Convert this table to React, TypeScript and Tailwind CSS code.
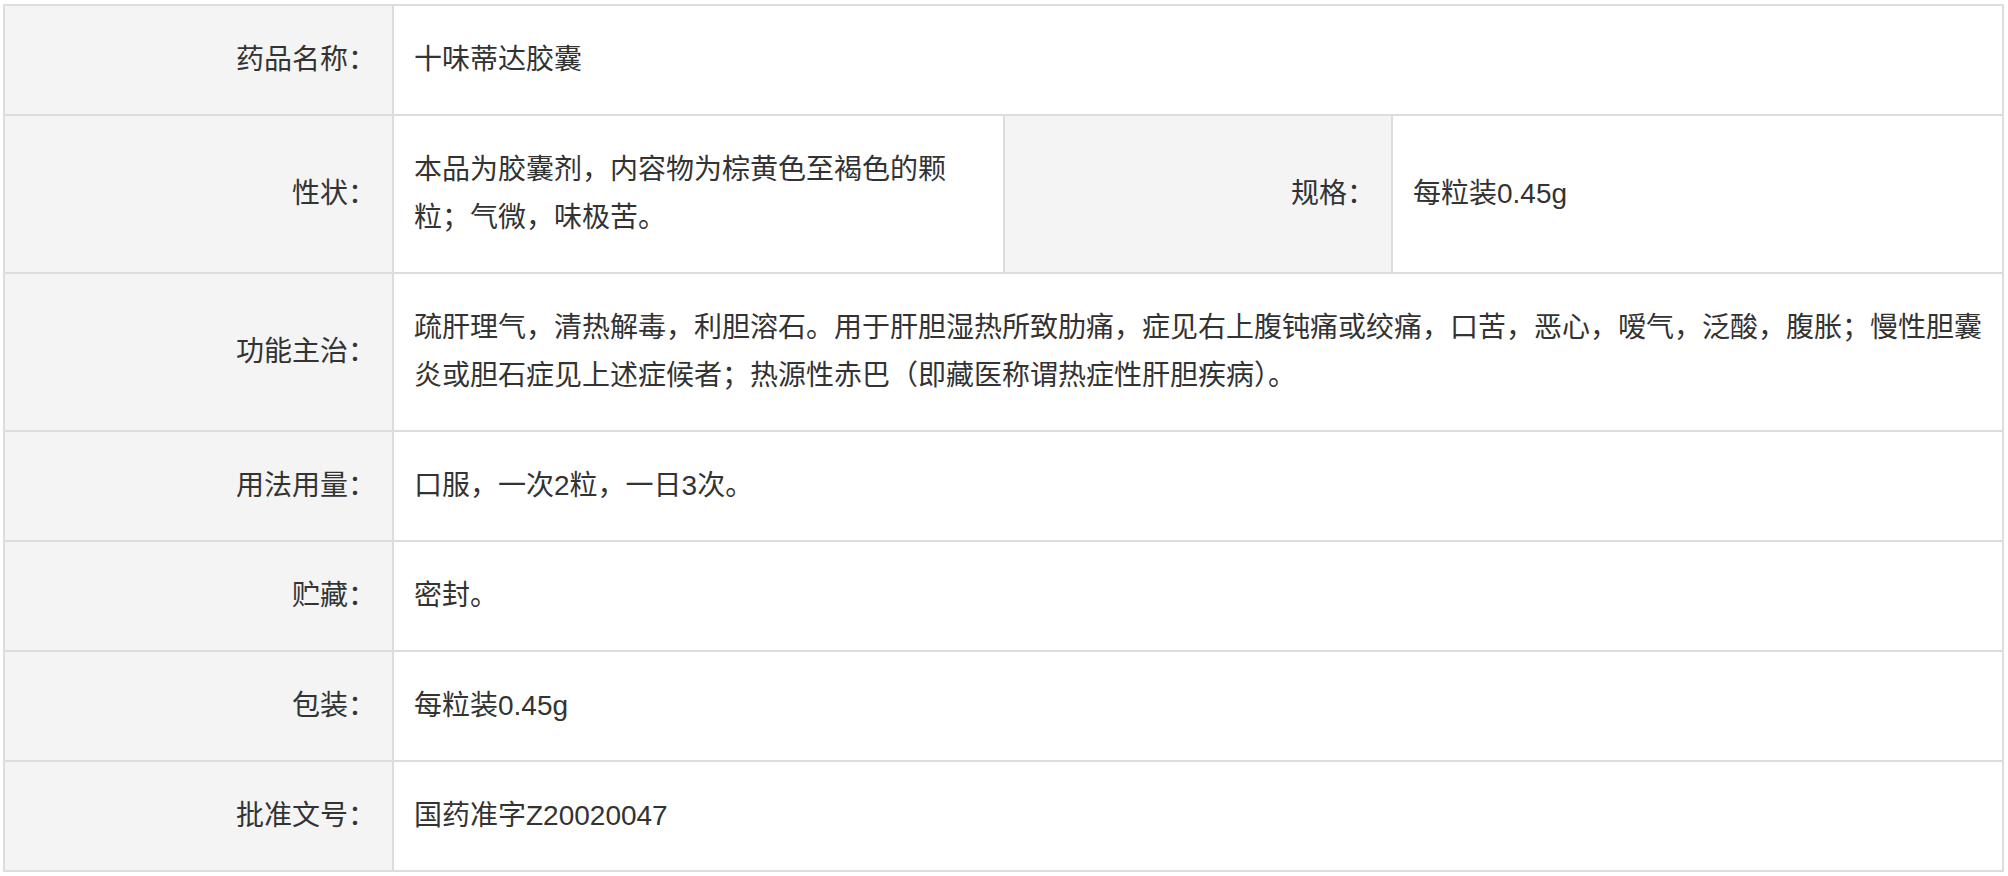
import React from "react";

const Label = ({ children }: { children: React.ReactNode }) => (
  <div className="flex items-center justify-end border-r-2 border-b-2 border-[#dddddd] bg-[#f4f4f4] py-[30px] pr-[16px] pl-[20px]">
    <span>{children}：</span>
  </div>
);

const Value = ({ children, wide }: { children: React.ReactNode; wide?: boolean }) => (
  <div
    className={
      wide
        ? "col-span-3 flex items-center border-r-2 border-b-2 border-[#dddddd] bg-white py-[30px] pl-[20px] pr-[10px]"
        : "flex items-center border-r-2 border-b-2 border-[#dddddd] bg-white py-[30px] pl-[20px] pr-[20px]"
    }
  >
    <span>{children}</span>
  </div>
);

export default function App() {
  return (
    <div className="min-h-screen bg-white pt-[4px] pl-[3px] font-['Liberation_Sans','Noto_Sans_CJK_SC',sans-serif] text-[28px] leading-[48px] text-[#333333]">
      <div className="grid w-fit grid-cols-[389px_611px_388px_611px] border-t-2 border-l-2 border-[#dddddd]">
        <Label>药品名称</Label>
        <Value wide>十味蒂达胶囊</Value>

        <Label>性状</Label>
        <Value>本品为胶囊剂，内容物为棕黄色至褐色的颗粒；气微，味极苦。</Value>
        <Label>规格</Label>
        <Value>每粒装0.45g</Value>

        <Label>功能主治</Label>
        <Value wide>
          疏肝理气，清热解毒，利胆溶石。用于肝胆湿热所致肋痛，症见右上腹钝痛或绞痛，口苦，恶心，嗳气，泛酸，腹胀；慢性胆囊炎或胆石症见上述症候者；热源性赤巴（即藏医称谓热症性肝胆疾病）。
        </Value>

        <Label>用法用量</Label>
        <Value wide>口服，一次2粒，一日3次。</Value>

        <Label>贮藏</Label>
        <Value wide>密封。</Value>

        <Label>包装</Label>
        <Value wide>每粒装0.45g</Value>

        <Label>批准文号</Label>
        <Value wide>国药准字Z20020047</Value>
      </div>
    </div>
  );
}
